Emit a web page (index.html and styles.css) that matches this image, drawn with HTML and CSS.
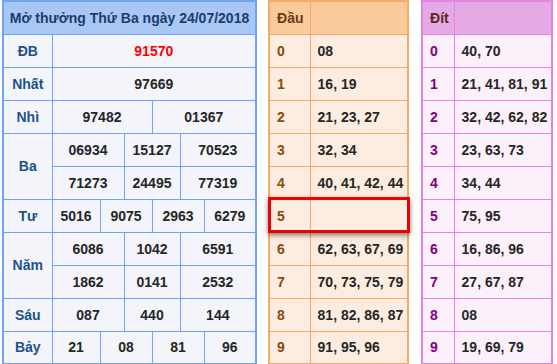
FILE: index.html
```html
<!DOCTYPE html>
<html lang="vi">
<head>
    <meta charset="UTF-8">
    <title>Kết quả xổ số</title>
    <link rel="stylesheet" href="styles.css">
</head>
<body>
    <div class="wrap">
        <!-- bảng kết quả -->
        <table class="kq">
            <colgroup>
                <col style="width:49px"><col style="width:48px"><col style="width:24px"><col style="width:28px"><col style="width:28px"><col style="width:24px"><col style="width:52px">
            </colgroup>
            <tr><th colspan="7" class="title">Mở thưởng Thứ Ba ngày 24/07/2018</th></tr>
            <tr><td class="lbl">ĐB</td><td colspan="6" class="db">91570</td></tr>
            <tr><td class="lbl">Nhất</td><td colspan="6">97669</td></tr>
            <tr><td class="lbl">Nhì</td><td colspan="3">97482</td><td colspan="3">01367</td></tr>
            <tr><td class="lbl" rowspan="2">Ba</td><td colspan="2">06934</td><td colspan="2">15127</td><td colspan="2">70523</td></tr>
            <tr><td colspan="2">71273</td><td colspan="2">24495</td><td colspan="2">77319</td></tr>
            <tr><td class="lbl">Tư</td><td>5016</td><td colspan="2">9075</td><td colspan="2">2963</td><td>6279</td></tr>
            <tr><td class="lbl" rowspan="2">Năm</td><td colspan="2">6086</td><td colspan="2">1042</td><td colspan="2">6591</td></tr>
            <tr><td colspan="2">1862</td><td colspan="2">0141</td><td colspan="2">2532</td></tr>
            <tr><td class="lbl">Sáu</td><td colspan="2">087</td><td colspan="2">440</td><td colspan="2">144</td></tr>
            <tr><td class="lbl">Bảy</td><td>21</td><td colspan="2">08</td><td colspan="2">81</td><td>96</td></tr>
        </table>

        <!-- bảng đầu -->
        <div class="dau-box">
            <table class="loto dau">
                <colgroup><col style="width:41px"><col style="width:98px"></colgroup>
                <tr><th>Đầu</th><th></th></tr>
                <tr><td class="so">0</td><td>08</td></tr>
                <tr><td class="so">1</td><td>16, 19</td></tr>
                <tr><td class="so">2</td><td>21, 23, 27</td></tr>
                <tr><td class="so">3</td><td>32, 34</td></tr>
                <tr><td class="so">4</td><td>40, 41, 42, 44</td></tr>
                <tr><td class="so">5</td><td></td></tr>
                <tr><td class="so">6</td><td>62, 63, 67, 69</td></tr>
                <tr><td class="so">7</td><td>70, 73, 75, 79</td></tr>
                <tr><td class="so">8</td><td>81, 82, 86, 87</td></tr>
                <tr><td class="so">9</td><td>91, 95, 96</td></tr>
            </table>
            <div class="mark"></div>
        </div>

        <!-- bảng đít -->
        <table class="loto dit">
            <colgroup><col style="width:32px"><col style="width:98px"></colgroup>
            <tr><th>Đít</th><th></th></tr>
            <tr><td class="so">0</td><td>40, 70</td></tr>
            <tr><td class="so">1</td><td>21, 41, 81, 91</td></tr>
            <tr><td class="so">2</td><td>32, 42, 62, 82</td></tr>
            <tr><td class="so">3</td><td>23, 63, 73</td></tr>
            <tr><td class="so">4</td><td>34, 44</td></tr>
            <tr><td class="so">5</td><td>75, 95</td></tr>
            <tr><td class="so">6</td><td>16, 86, 96</td></tr>
            <tr><td class="so">7</td><td>27, 67, 87</td></tr>
            <tr><td class="so">8</td><td>08</td></tr>
            <tr><td class="so">9</td><td>19, 69, 79</td></tr>
        </table>
    </div>
</body>
</html>
```

FILE: styles.css
```css
body {
    margin: 0;
    background-color: #fff;
    font-family: "Liberation Sans", Arial, sans-serif;
    font-size: 14px;
    font-weight: bold;
    color: #262626;
}
.wrap {
    display: flex;
    align-items: flex-start;
    padding-left: 2px;
}
table {
    border-collapse: collapse;
    table-layout: fixed;
}
tr {
    height: 33px;
}
th, td {
    padding: 0;
    font-weight: bold;
}

/* bảng kết quả */
.kq {
    width: 255px;
    border: 2px solid #70a3f0;
    background-color: #f3f5fa;
}
.kq td, .kq th {
    border: 1px solid #70a3f0;
    text-align: center;
}
.kq .title {
    background-color: #a8c7f4;
    color: #1b3d6b;
}
.kq .lbl {
    color: #1c5289;
}
.kq .db {
    color: #ff0000;
}

/* bảng lô tô */
.loto td, .loto th {
    text-align: left;
    padding-left: 7px;
}
.dau-box {
    position: relative;
    margin-left: 11px;
}
.dau {
    width: 141px;
    border: 2px solid #f6aa66;
    background-color: #fdede0;
}
.dau td, .dau th {
    border: 1px solid #f6aa66;
}
.dau th {
    background-color: #fac99c;
    color: #6a3a12;
}
.dau .so {
    color: #8a4a0e;
}
.dit {
    width: 132px;
    margin-left: 12px;
    border: 2px solid #e784e0;
    background-color: #fcf0fb;
}
.dit td, .dit th {
    border: 1px solid #e784e0;
}
.dit th {
    background-color: #e5a9e6;
    color: #5a2a18;
}
.dit .so {
    color: #80007f;
}

/* khung đánh dấu đầu 5 */
.mark {
    position: absolute;
    left: 0;
    right: -1px;
    top: 197px;
    height: 30px;
    border: 3px solid #ee0000;
    box-shadow: 0 2px 5px rgba(0,0,0,0.5);
}
```
